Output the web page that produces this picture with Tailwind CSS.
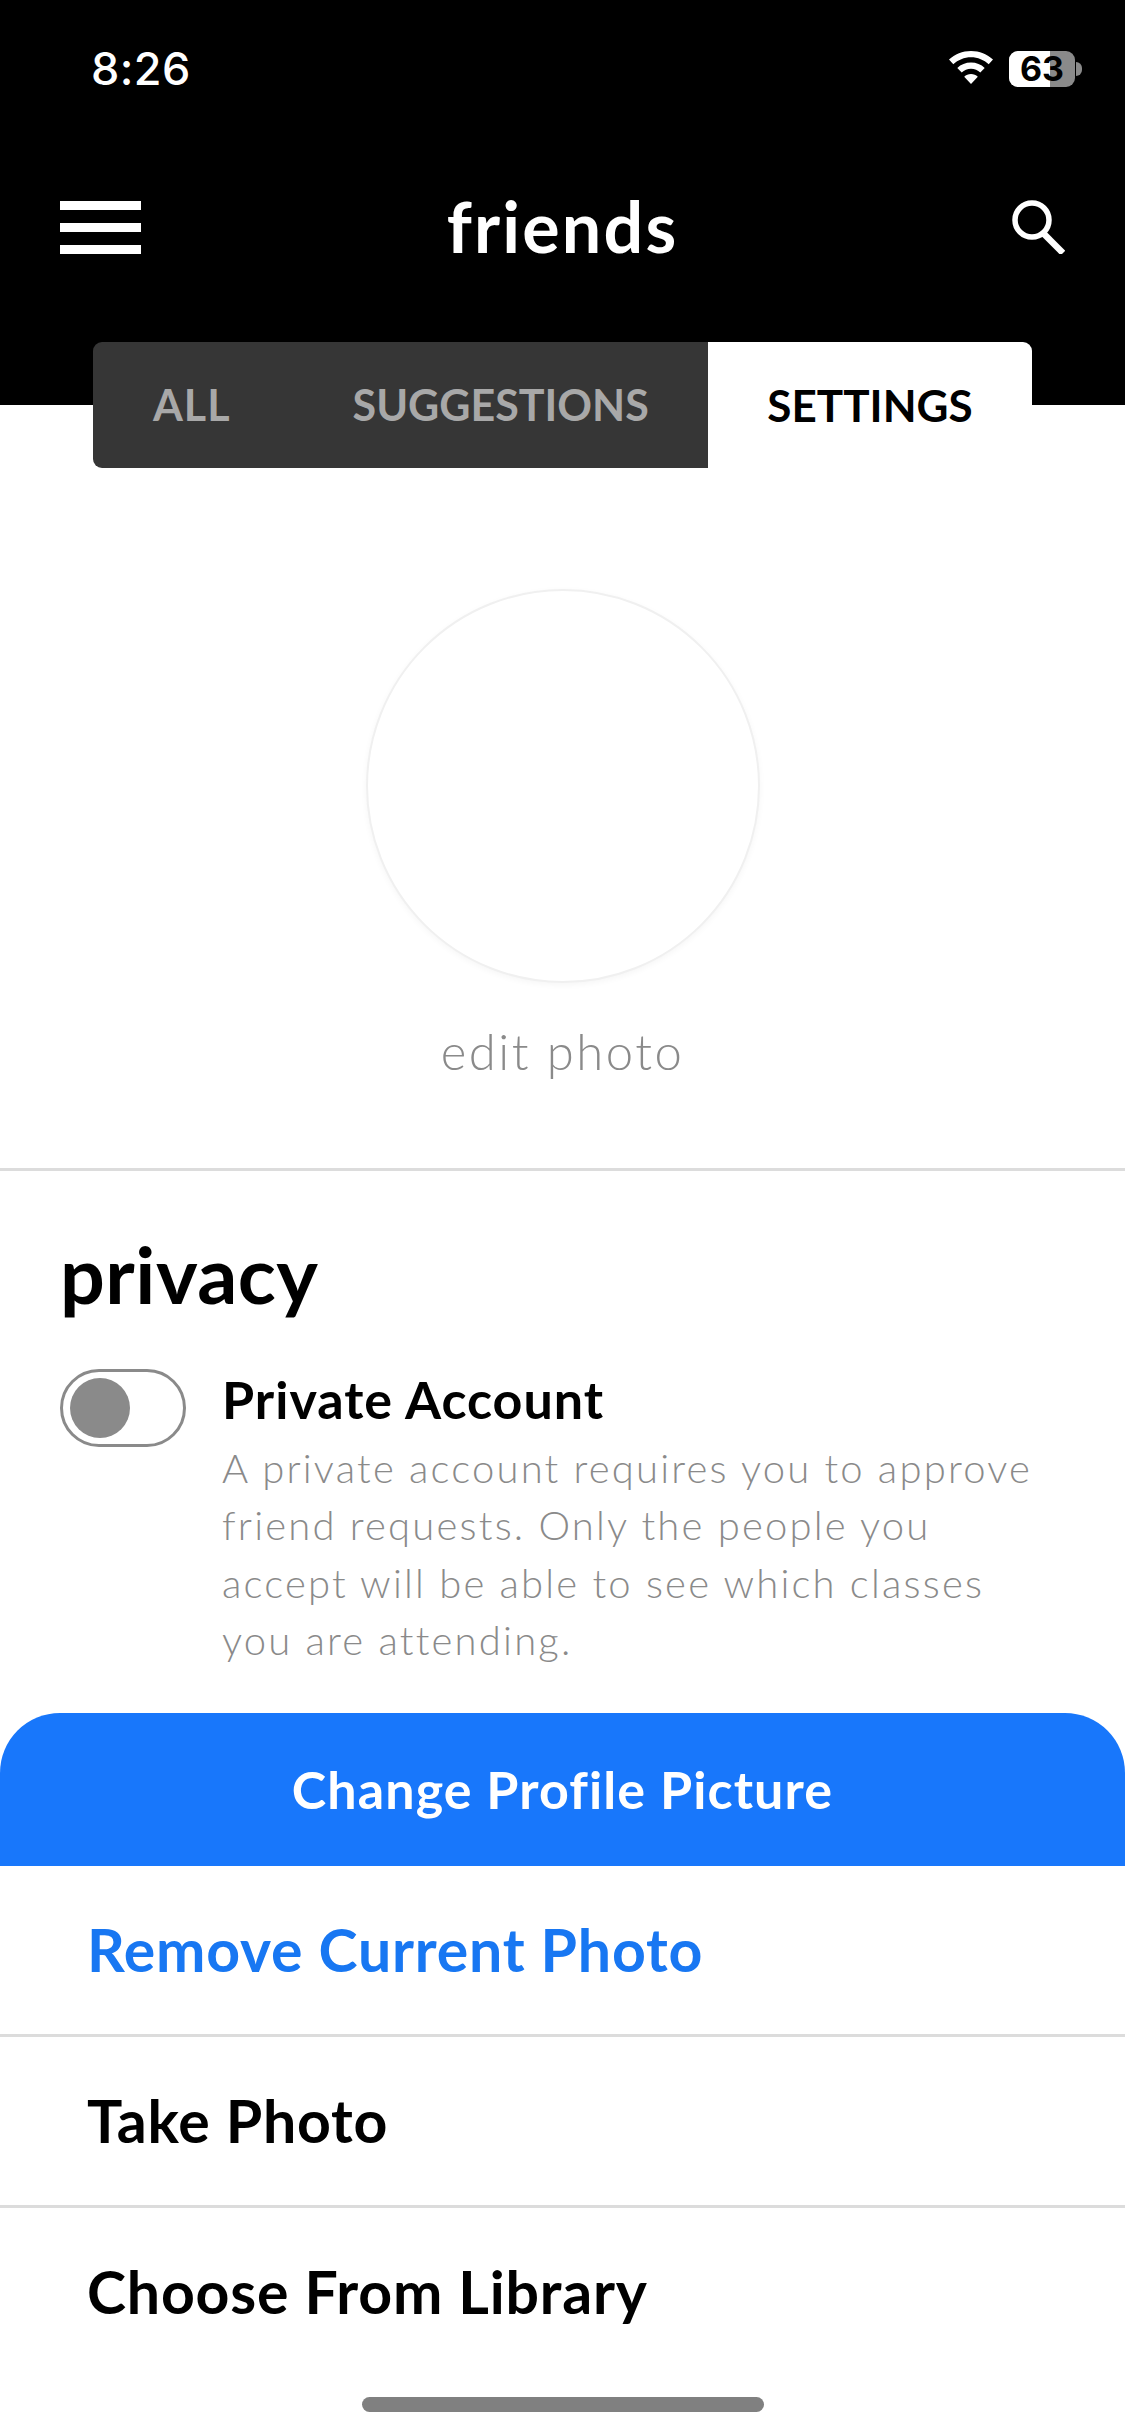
<!doctype html>
<html><head><meta charset="utf-8"><script src="https://cdn.jsdelivr.net/npm/@tailwindcss/browser@4"></script></head>
<body class="m-0 bg-white">
<div class="relative w-[1125px] h-[2436px] overflow-hidden bg-white font-['Lato','Liberation_Sans',sans-serif] flex flex-col">
  <header class="bg-black h-[405px] shrink-0 flex flex-col">
    <div class="h-[184px] pl-[91px] pr-[43px] flex items-start justify-between pt-[42px]">
      <span class="text-white text-[45px] leading-[54px] font-medium font-['Inter',sans-serif] tracking-[0.4px]">8:26</span>
      <div class="flex items-center pt-[9px]">
        <svg class="w-[46px] h-[36px] mr-[15px]" viewBox="0 0 46 36"><path fill="#fff" d="M23 0C14.5 0 6.8 3.200 1 8.600l4.300 4.600C10 8.900 16.200 6.200 23 6.200s13 2.700 17.700 7l4.300-4.600C39.200 3.200 31.500 0 23 0z"/><path fill="#fff" d="M23 11.500c-5.300 0-10.100 2-13.700 5.400l4.400 4.600c2.500-2.200 5.700-3.700 9.300-3.700s6.800 1.500 9.300 3.700l4.400-4.600C33.100 13.500 28.300 11.500 23 11.500z"/><path fill="#fff" d="M23 23c-2.600 0-5 1-6.800 2.800L23 33l6.800-7.200C28 24 25.600 23 23 23z"/></svg>
        <div class="relative w-[66px] h-[36px] rounded-[9px] bg-[#8a8a8a] flex items-center justify-center">
          <div class="absolute left-0 top-0 bottom-0 w-[41px] bg-white rounded-l-[9px]"></div>
          <span class="relative text-black text-[34px] leading-[36px] font-bold font-['Inter',sans-serif]">63</span>
        </div>
        <div class="w-[6px] h-[14px] ml-[1px] rounded-r-full bg-[#8a8a8a]"></div>
      </div>
    </div>
    <div class="h-[84px] pl-[60px] pr-[60px] flex items-center justify-between relative">
      <div class="flex flex-col gap-[13px] w-[81px] mt-[3px]">
        <div class="h-[9px] bg-white"></div><div class="h-[9px] bg-white"></div><div class="h-[9px] bg-white"></div>
      </div>
      <h1 class="absolute left-0 right-0 text-center text-white text-[70px] leading-[84px] font-bold tracking-[2.2px]">friends</h1>
      <svg class="w-[56px] h-[56px]" viewBox="0 0 56 56" fill="none" stroke="#fff"><circle cx="23" cy="22" r="17" stroke-width="5.500"/><path d="M34 35l20 20" stroke-width="6.500"/></svg>
    </div>
  </header>

  <div class="absolute left-[93px] top-[342px] w-[939px] h-[126px] flex rounded-[9px] overflow-hidden">
    <div class="w-[615px] bg-[#363636] flex items-center text-[#a8a8a8] text-[43px] font-bold">
      <span class="ml-[60px] tracking-[1px]">ALL</span><span class="ml-[122px]">SUGGESTIONS</span>
    </div>
    <div class="flex-1 bg-white flex items-center justify-center text-black text-[44px] font-bold">SETTINGS</div>
  </div>

  <section class="h-[766px] shrink-0 border-b-[3px] border-[#dcdcdc] flex flex-col items-center pt-[184px]">
    <div class="w-[394px] h-[394px] rounded-full bg-white border-[2px] border-[#f0f0f0] shadow-[0_2px_6px_rgba(0,0,0,0.04)]"></div>
    <p class="mt-[38px] text-[49px] leading-[60px] text-[#8a8a8a] font-light tracking-[2.5px]">edit photo</p>
  </section>

  <section class="pl-[60px] pr-[60px] pt-[58px]">
    <h2 class="text-[79px] leading-[90px] font-bold text-black tracking-[0.5px]">privacy</h2>
    <div class="flex mt-[50px]">
      <div class="w-[126px] h-[78px] shrink-0 rounded-full border-[3px] border-[#8a8a8a] bg-white flex items-center pl-[7px]">
        <div class="w-[60px] h-[60px] rounded-full bg-[#8a8a8a]"></div>
      </div>
      <div class="ml-[36px] flex-1">
        <h3 class="text-[52px] leading-[60px] font-bold text-black tracking-[1px]">Private Account</h3>
        <p class="mt-[11px] text-[40px] leading-[57.3px] font-light text-[#8a8a8a] tracking-[2.2px] whitespace-nowrap">A private account requires you to approve<br>friend requests. Only the people you<br>accept will be able to see which classes<br>you are attending.</p>
      </div>
    </div>
  </section>

  <div class="absolute left-0 right-0 top-[1713px] bottom-0 bg-white flex flex-col">
    <div class="h-[153px] pb-[2px] rounded-t-[60px] bg-[#1877fb] flex items-center justify-center text-white text-[52px] font-bold tracking-[1.1px]">Change Profile Picture</div>
    <div class="h-[171px] pl-[87px] flex items-center border-b-[3px] border-[#dcdcdc] text-[#1877f2] text-[59px] font-bold tracking-[0.8px]">Remove Current Photo</div>
    <div class="h-[171px] pl-[87px] flex items-center border-b-[3px] border-[#dcdcdc] text-black text-[59px] font-bold tracking-[0.8px]">Take Photo</div>
    <div class="h-[171px] pl-[87px] pb-[2px] flex items-center text-black text-[59px] font-bold tracking-[0.8px]">Choose From Library</div>
  </div>
  <div class="absolute left-[362px] top-[2397px] w-[402px] h-[15px] rounded-full bg-[#808080]"></div>
</div>
</body></html>
